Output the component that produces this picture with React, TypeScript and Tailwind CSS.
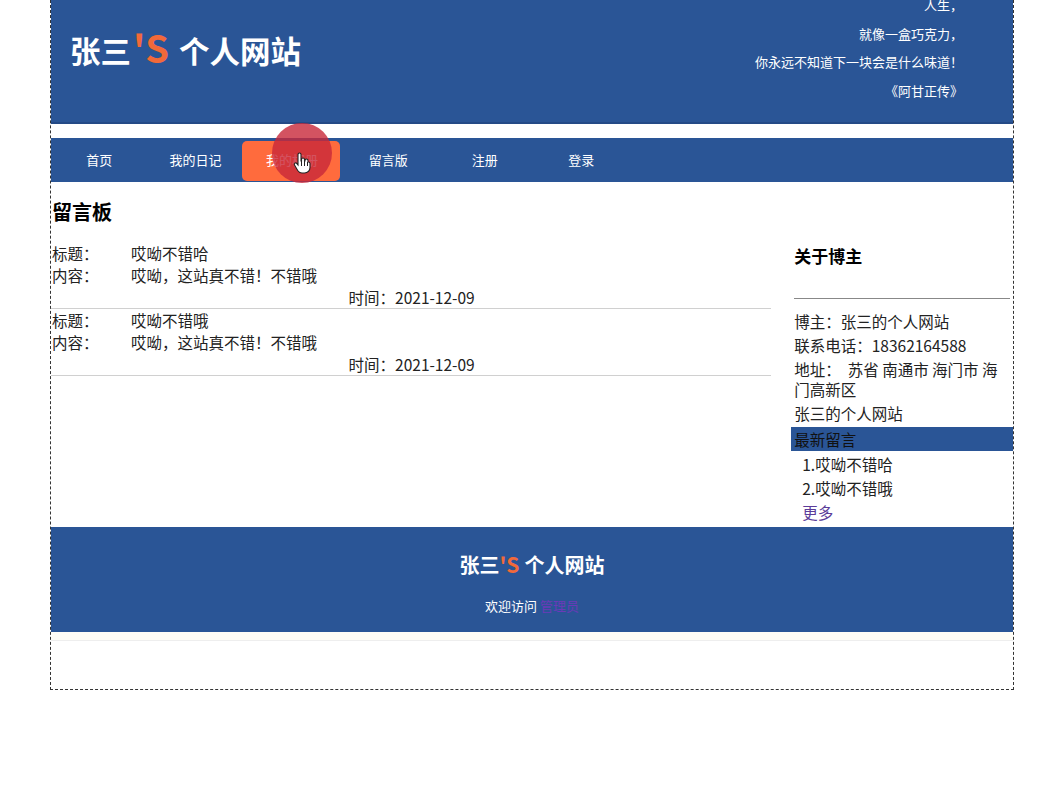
import { useState } from 'react';

const FONT = "font-['Microsoft_YaHei','Noto_Sans_CJK_SC',sans-serif]";

const navItems = ['首页', '我的日记', '我的相册', '留言版', '注册', '登录'];

const messages = [
  { title: '哎呦不错哈', content: '哎呦，这站真不错！不错哦', time: '2021-12-09' },
  { title: '哎呦不错哦', content: '哎呦，这站真不错！不错哦', time: '2021-12-09' },
];

function Logo({ big }: { big?: boolean }) {
  return (
    <span className={`font-bold text-white ${big ? 'text-[30.5px]' : 'text-[20px]'}`}>
      张三
      <span className={`text-[#f2693a] ${big ? 'text-[38px] mx-[2px]' : 'text-[21px]'}`}>'S</span>
      <span className={big ? 'ml-[8px]' : 'ml-[5px]'}>个人网站</span>
    </span>
  );
}

export default function App() {
  const [active] = useState(2);

  return (
    <div className={`${FONT} min-h-[803px] bg-white`}>
      <div className="ml-[50px] w-[964px] h-[690px] border-x border-b border-dashed border-[#333]">
        {/* header */}
        <div className="h-[124px] bg-[#2a5596] border-b-2 border-[#244a86] flex justify-between overflow-hidden">
          <div className="pl-[19px] pt-[28px] leading-none">
            <Logo big />
          </div>
          <div className="pr-[50px] -mt-[9px] text-right text-[13px] leading-[28.5px] text-white">
            <p>人生，</p>
            <p>就像一盒巧克力，</p>
            <p>你永远不知道下一块会是什么味道！</p>
            <p>《阿甘正传》</p>
          </div>
        </div>

        {/* nav */}
        <div className="mt-[14px] h-[44px] bg-[#2a5596] flex items-center">
          {navItems.map((item, i) => (
            <div key={item} className="relative w-[96.4px] h-full flex items-center justify-center">
              {i === active && (
                <div className="absolute left-[-2px] right-[0px] top-[3px] bottom-[1px] rounded-[5px] bg-[#ff6b3d]" />
              )}
              <span className="relative text-[13px] text-white">{item}</span>
              {i === active && (
                <div className="absolute left-[28px] top-[-15px] w-[60px] h-[60px] rounded-full bg-[#c8283a]/80 flex items-center justify-center">
                  <svg width="18" height="22" viewBox="0 0 18 22" className="mt-[20px]">
                    <path
                      d="M5 2.5a1.5 1.5 0 0 1 3 0V9h.5V7.5a1.5 1.5 0 0 1 3 0V9h.5V8.5a1.5 1.5 0 0 1 3 0V10h.3a1.5 1.5 0 0 1 1.7 1.5v4c0 3-2.3 5.5-5.5 5.5H9c-2 0-3.3-1-4.3-2.5L1.5 13a1.4 1.4 0 0 1 2.2-1.7L5 13z"
                      fill="white"
                      stroke="#222"
                      strokeWidth="1.1"
                    />
                    <path d="M8.5 9v5M11.5 9v5M14.5 10v4" stroke="#222" strokeWidth="1" />
                  </svg>
                </div>
              )}
            </div>
          ))}
        </div>

        {/* main */}
        <div className="flex pt-[16px] h-[345px]">
          <div className="w-[721px]">
            <h2 className="pl-[1px] text-[20px] font-bold text-black leading-[28px]">留言板</h2>
            <div className="mt-[16px]">
              {messages.map((m, i) => (
                <div key={i} className="border-b border-[#d0d0d0] text-[15.5px] text-[#222] leading-[22px] pl-[1px]">
                  <div className="flex">
                    <span className="w-[79px]">标题：</span>
                    <span>{m.title}</span>
                  </div>
                  <div className="flex">
                    <span className="w-[79px]">内容：</span>
                    <span>{m.content}</span>
                  </div>
                  <div className="text-center">时间：{m.time}</div>
                </div>
              ))}
            </div>
          </div>

          <div className="ml-[20px] w-[222px] pt-[46px]">
            <h3 className="pl-[3px] text-[17px] font-bold text-black leading-[24px]">关于博主</h3>
            <div className="mx-[3px] mt-[30px] border-t border-[#888]" />
            <div className="mt-[12px] pl-[3px] pr-[2px] text-[15.5px] text-[#222] leading-[20px] space-y-[4px]">
              <p>博主：张三的个人网站</p>
              <p>联系电话：18362164588</p>
              <p>地址：&nbsp;&nbsp;苏省 南通市 海门市 海门高新区</p>
              <p>张三的个人网站</p>
            </div>
            <div className="mt-[4px] h-[24px] bg-[#2a5596] text-[15.5px] text-[#111] leading-[24px] pl-[3px]">最新留言</div>
            <div className="pl-[11px] text-[15.5px] text-[#222] leading-[22px] mt-[2px] space-y-[2px]">
              <p>1.哎呦不错哈</p>
              <p>2.哎呦不错哦</p>
              <a className="text-[#5b3c99]">更多</a>
            </div>
          </div>
        </div>

        {/* footer */}
        <div className="h-[105px] bg-[#2a5596] flex flex-col items-center pt-[22px]">
          <Logo />
          <p className="mt-[15px] text-[13px] text-white">
            欢迎访问 <a className="text-[#6a3ab8]">管理员</a>
          </p>
        </div>
        <div className="h-[8px] bg-[#fffdf6]" />
        <div className="h-[1px] bg-[#eeeeee]" />
      </div>
    </div>
  );
}
